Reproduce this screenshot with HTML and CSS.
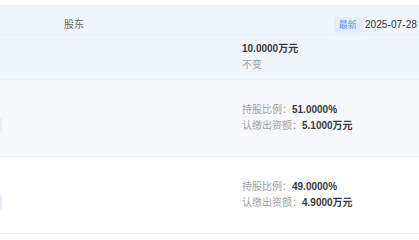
FILE: index.html
```html
<!DOCTYPE html>
<html lang="zh-CN">
<head>
<meta charset="UTF-8">
<meta name="viewport" content="width=device-width, initial-scale=1.0">
<link rel="stylesheet" href="styles.css">
</head>
<body>
<div class="table">
    <div class="row head">
        <div class="c-tag"></div>
        <div class="c-name">股东</div>
        <div class="c-val latest">
            <span class="badge">最新</span>
            <span class="date">2025-07-28</span>
        </div>
    </div>

    <div class="row capital">
        <div class="c-tag"></div>
        <div class="c-name"></div>
        <div class="c-val">
            <div class="num">10.0000万元</div>
            <div class="muted">不变</div>
        </div>
    </div>

    <div class="row holder alt">
        <div class="c-tag"><span class="tag"></span></div>
        <div class="c-name"></div>
        <div class="c-val">
            <div><span class="muted">持股比例：</span><span class="num">51.0000%</span></div>
            <div><span class="muted">认缴出资额：</span><span class="num">5.1000万元</span></div>
        </div>
    </div>

    <div class="row holder">
        <div class="c-tag"><span class="tag"></span></div>
        <div class="c-name"></div>
        <div class="c-val">
            <div><span class="muted">持股比例：</span><span class="num">49.0000%</span></div>
            <div><span class="muted">认缴出资额：</span><span class="num">4.9000万元</span></div>
        </div>
    </div>
</div>
</body>
</html>
```

FILE: styles.css
```css
* {
    box-sizing: border-box;
}
body {
    margin: 0;
    background: #fff;
    font-family: "Liberation Sans", "Noto Sans CJK SC", sans-serif;
    font-size: 10px;
    line-height: 16px;
    color: #333;
    overflow: hidden;
}
.table {
    margin-top: 5px;
    border-top: 1px solid #e8eef5;
}
.row {
    display: grid;
    grid-template-columns: 64px 178px 177px;
    border-bottom: 1px solid #e8eef5;
}
.row > div {
    display: flex;
    flex-direction: column;
    justify-content: center;
}
/* header strip */
.head {
    height: 29px;
    background: #f0f5fa;
}
.head .c-name {
    color: #666;
}
.latest {
    flex-direction: row !important;
    align-items: center;
    justify-content: flex-end !important;
    gap: 3px;
    padding-right: 2px;
}
.badge {
    height: 16px;
    padding: 0 5px;
    border-radius: 2px;
    background: #e3eefd;
    color: #5b93f3;
    font-size: 9px;
}
.date {
    font-size: 10.2px;
    color: #333;
    white-space: nowrap;
}
.capital {
    height: 45px;
    background: #f0f5fa;
}
.holder {
    height: 77px;
    background: #fff;
}
.holder.alt {
    background: #f7f9fc;
}
.num {
    font-weight: bold;
    color: #3a3a3a;
}
.muted {
    color: #a0a0a0;
}
/* tag of the clipped name column */
.c-tag {
    justify-content: flex-start !important;
    padding-top: 38px;
}
.tag {
    display: block;
    width: 40px;
    height: 15px;
    margin-left: -38px;
    border-radius: 2px;
    background: #e6f0fe;
}
```
